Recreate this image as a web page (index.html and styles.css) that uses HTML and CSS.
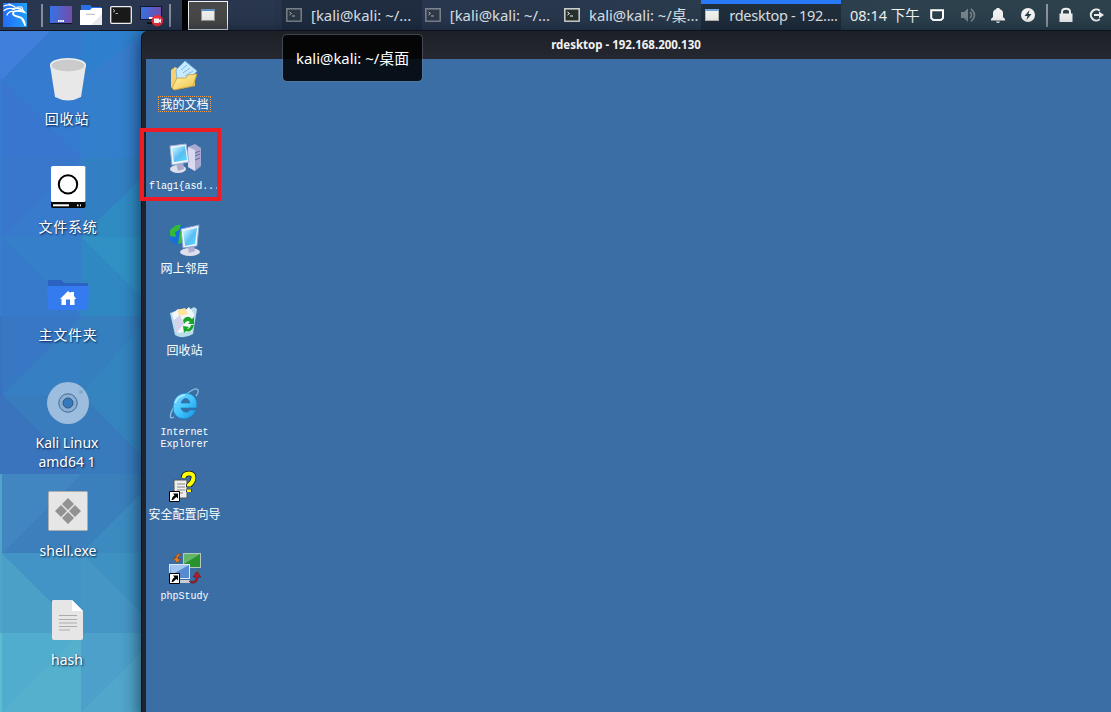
FILE: index.html
```html
<!DOCTYPE html>
<html lang="zh-CN">
<head>
<meta charset="utf-8">
<title>Kali desktop</title>
<link rel="stylesheet" href="styles.css">
</head>
<body>
<div class="screen">
<svg class="wallpaper" width="150" height="682" viewBox="0 30 150 682" shape-rendering="crispEdges">
  <rect y="30" width="150" height="682" fill="#377dcd"/>
  <path d="M0 30H51L3 79H0z" fill="#407fdc"/><path d="M51 30H81L3 79z" fill="#347bd0"/><path d="M81 30H150L81 79z" fill="#2e7fcd"/><path d="M51 30H81V79H3z" fill="#347bd0"/>
  <path d="M2 79H81V158z" fill="#357bd0"/><path d="M2 79V158H81z" fill="#3876d0"/><path d="M81 79H150V158H81z" fill="#347fcb"/>
  <path d="M2 158H81L2 237z" fill="#3877cc"/><path d="M81 158V237H2z" fill="#387bcc"/><path d="M81 158H150V170L81 237z" fill="#327fc3"/><path d="M150 170V237H81z" fill="#308bc3"/>
  <path d="M2 237H81V316z" fill="#347fc7"/><path d="M2 237V316H81z" fill="#377acb"/><path d="M81 237H150V306z" fill="#3191c4"/><path d="M81 237V316H150V306z" fill="#3088c2"/>
  <path d="M2 316H81L2 395z" fill="#3777c3"/><path d="M81 316V395H2z" fill="#377fc3"/><path d="M81 316H150L81 395z" fill="#357fbe"/><path d="M150 316V395H81z" fill="#3484c0"/>
  <path d="M2 395H81V474z" fill="#397cbd"/><path d="M2 395V474H81z" fill="#3a74bd"/><path d="M81 395H150V464z" fill="#3584bf"/><path d="M81 395V474H150V464z" fill="#387bbd"/>
  <path d="M2 474H81L2 553z" fill="#4186c1"/><path d="M81 474V553H2z" fill="#3c7fbc"/><path d="M81 474H150V485L81 553z" fill="#3980bc"/><path d="M150 485V553H81z" fill="#3b8bc1"/>
  <path d="M2 553H81V633z" fill="#4293c6"/><path d="M2 553V633H81z" fill="#4ba0c7"/><path d="M81 553H150V622z" fill="#3d92c3"/><path d="M81 553V633H150V622z" fill="#4696c5"/>
  <path d="M2 633H81L2 712z" fill="#50adcd"/><path d="M81 633V712H2z" fill="#55b0cd"/><path d="M81 633H150V644L81 712z" fill="#4ca0c9"/><path d="M150 644V712H81z" fill="#51a6cb"/>
  <path d="M0 316H2V474H0z" fill="#3973c0"/><path d="M0 474H2V633H0z" fill="#51a3c8"/><path d="M0 633H2V712H0z" fill="#5bbdd0"/>
</svg>

<header class="panel">
  <svg class="launchers" width="282" height="30" viewBox="0 0 282 30">
    <defs>
      <linearGradient id="kali" x2="1"><stop stop-color="#246cf5"/><stop offset="1" stop-color="#21a0f8"/></linearGradient>
      <linearGradient id="desk" x2="1"><stop stop-color="#3474e5"/><stop offset="1" stop-color="#764ba9"/></linearGradient>
    </defs>
    <rect x="3" y="3" width="24" height="24" fill="url(#kali)"/>
    <g fill="none" stroke="#fff" stroke-linecap="round">
      <path stroke-width="1.3" d="M4 6Q10 3.5 15 7M4 10.5Q9 7 14 9.5M7 15Q9 11 13 11.5M9 4L15 7"/>
      <path stroke-width="1.8" d="M13 9Q18 7 22 10L24 12L20 11Q13 10 13 14Q14 16 19 17Q24 18 25 25"/>
      <path stroke-width="1" d="M17 7L22 7L23 10M22 20L25 25"/>
    </g>
    <rect x="41" y="4" width="2" height="23" fill="#858d9b"/>
    <rect x="50" y="6" width="22" height="17" fill="url(#desk)"/><path d="M50 23.5H72" stroke="#11152a"/><path d="M58 21H64" stroke="#fff" stroke-width="2" stroke-dasharray="1.6 .6"/>
    <path d="M81 5H90L92 7H101V13H81z" fill="#2870e8"/><path d="M80 10H90L92 8H102V25H80z" fill="#fff"/><path d="M102 14V25H91z" fill="#e9e9e9"/><path d="M86 14.3H95" stroke="#bbb"/>
    <rect x="110.7" y="6.7" width="20.6" height="16.6" rx="1" fill="#191919" stroke="#eee" stroke-width="1.3"/><path d="M113 9L115 11L113 12M115.5 13.5H118" fill="none" stroke="#aaa"/>
    <rect x="140.5" y="6.5" width="21" height="13" fill="url(#desk)" stroke="#14172a"/><path d="M147 23H157" stroke="#111" stroke-width="2"/><path d="M149 18H153" stroke="#fff" stroke-width="2"/><circle cx="157.3" cy="20.7" r="5.8" fill="#f52d3d"/><path d="M154 18.5H159V20L161 18.7V23L159 21.7V23H154z" fill="#fff"/>
    <rect x="169" y="4" width="2" height="23" fill="#858d9b"/>
    <path d="M182 0H188V30H182z" fill="#000"/><rect x="188.5" y="1.5" width="39" height="28" fill="#484848" stroke="#f2f2f2"/>
    <rect x="201.5" y="9.5" width="13" height="11" fill="#eee" stroke="#969992"/><path d="M201 10H215" stroke="#628fc1" stroke-width="2"/>
    <path d="M275 0H282V30H275z" fill="#28344b"/>
  </svg>
  <nav class="tasks">
    <div class="task dark"><svg class="term dim" width="16" height="14"><rect x=".8" y=".8" width="14.4" height="12.4" fill="#343d47" stroke="#bdbfc0" stroke-width="1.4"/><path d="M3.5 4L5.5 5.5L3.5 7M6 8H9" fill="none" stroke="#fff"/></svg><span>[kali@kali: ~/...</span></div>
    <div class="task"><svg class="term dim" width="16" height="14"><rect x=".8" y=".8" width="14.4" height="12.4" fill="#343d47" stroke="#bdbfc0" stroke-width="1.4"/><path d="M3.5 4L5.5 5.5L3.5 7M6 8H9" fill="none" stroke="#fff"/></svg><span>[kali@kali: ~/...</span></div>
    <div class="task"><svg class="term" width="16" height="14"><rect x=".8" y=".8" width="14.4" height="12.4" fill="#28312e" stroke="#d5d6d1" stroke-width="1.5"/><path d="M3.5 4L5.5 5.5L3.5 7M6 8H9" fill="none" stroke="#fff"/></svg><span>kali@kali: ~/桌...</span></div>
    <div class="task active"><svg class="term" width="16" height="14"><rect x="1.5" y="1.5" width="13" height="11" fill="#f0f0ec" stroke="#b8bab4"/><path d="M1 2H15" stroke="#70a3da" stroke-width="2"/></svg><span>rdesktop - 192....</span></div>
  </nav>
  <time class="clock">08:14 下午</time>
  <svg class="tray" width="185" height="30" viewBox="926 0 185 30">
    <path d="M931.2 10.2H943V18L941 20H933.2L931.2 18z" fill="none" stroke="#fff" stroke-width="2"/>
    <g opacity=".35"><path d="M961 12H964L968 8.5V22L964 18H961z" fill="#fff"/><path d="M970 12Q973 15 970 18M971 8.8Q978 15 971 21.3" fill="none" stroke="#fff" stroke-width="1.6"/></g>
    <path d="M991 20.5V19L993 17V13Q993 10 996.5 9V8H999.5V9Q1003 10 1003 13V17L1005 19V20.5zM996 21.5H1000Q999.5 23 998 23T996 21.5" fill="#f2f2f2"/>
    <circle cx="1028" cy="15" r="7" fill="#f3f3f3"/><path d="M1029.5 10L1024.5 16H1027.5L1026.5 20L1031.5 14H1028.5z" fill="#293b49"/>
    <rect x="1046" y="4" width="2" height="23" fill="#89949e"/>
    <path d="M1059.5 13.5H1072.5V22H1059.5z" fill="#eee"/><path d="M1062 14V12Q1062 8.8 1066 8.8T1070 12V14" fill="none" stroke="#eee" stroke-width="2"/>
    <path d="M1099.8 10.7A5.5 5.5 0 1 0 1099.8 19.3M1094 15H1100" fill="none" stroke="#eee" stroke-width="2.1"/><path d="M1099 11.5L1104 15L1099 18.5z" fill="#eee"/>
  </svg>
</header>

<main class="desktop">
  <div class="item"><svg width="48" height="48"><path d="M6 10L11 42Q24 49 37 42L42 10z" fill="#e8e8e8"/><ellipse cx="24" cy="10" rx="18" ry="7" fill="#efefef"/><ellipse cx="24" cy="10.5" rx="16.5" ry="6" fill="#cbcbcb"/></svg><span class="shift cjk">回收站</span></div>
  <div class="item"><svg width="48" height="48"><rect x="7" y="3" width="34.5" height="42" rx="2" fill="#080808"/><rect x="7" y="3" width="34.5" height="36" rx="1.5" fill="#fff"/><circle cx="24" cy="21.4" r="9.2" fill="none" stroke="#000" stroke-width="2"/><path d="M9 42.3H25" stroke="#fff" stroke-width="2"/><path d="M33 42.3H37" stroke="#fff" stroke-width="1.7" stroke-dasharray="1.5"/></svg><span class="cjk">文件系统</span></div>
  <div class="item"><svg width="48" height="48"><path d="M4 9H17L20 12H44V20H4z" fill="#2c62bf"/><path d="M3 15H45L44 37Q44 39 42 39H6Q4 39 4 37z" fill="#347bef"/><path d="M16 28L24 20L26.5 22V21H30V25L32.3 28H30.5V34H26V28.5H22V34H17.5V28z" fill="#fff"/></svg><span class="cjk">主文件夹</span></div>
  <div class="item"><svg width="48" height="48"><circle cx="24" cy="24" r="21" fill="#9cbddd"/><circle cx="37" cy="13" r="2" fill="#81a9cf"/><circle cx="24" cy="24" r="9.2" fill="#8bafd5" stroke="#426993"/><circle cx="24" cy="24" r="5" fill="#347abd" stroke="#315779"/></svg><span class="shift">Kali Linux<br>amd64 1</span></div>
  <div class="item"><svg width="48" height="48"><rect x="4.5" y="4.5" width="39" height="39" rx="1" fill="#e6e6e6" stroke="#adadad"/><path d="M24 11L30 17L24 23L18 17zM24 25L30 31L24 37L18 31zM17 18L23 24L17 30L11 24zM31 18L37 24L31 30L25 24z" fill="#929292"/></svg><span>shell.exe</span></div>
  <div class="item last"><svg width="48" height="48"><path d="M9 4H28L39 15V42Q39 44 37 44H10Q8 44 8 42V5z" fill="#e6e6e6"/><path d="M28 4L39 15H28z" fill="#fff"/><path d="M15 19.5H33M15 23.5H33M15 27H33M15 30.5H33M15 34H26" stroke="#ababab"/></svg><span class="shift">hash</span></div>
</main>

<section class="window">
  <h1 class="title">rdesktop - 192.168.200.130</h1>
  <div class="client">
    <svg width="0" height="0" class="defs"><defs>
      <linearGradient id="lcd" x2="1" y2="1"><stop stop-color="#d6ffff"/><stop offset=".55" stop-color="#58bdf4"/><stop offset="1" stop-color="#58dfff"/></linearGradient>
      <linearGradient id="gold" x2="1" y2="1"><stop stop-color="#fff9b0"/><stop offset="1" stop-color="#eebf45"/></linearGradient>
      <linearGradient id="ie" x2="1" y2="1"><stop stop-color="#7ed8ff"/><stop offset=".5" stop-color="#43c7ff"/><stop offset="1" stop-color="#168bdc"/></linearGradient>
      <g id="shortcut"><path d="M.5 21.5H10.5V31.5H.5z" fill="#fff" stroke="#000"/><path d="M4 23.5H9V28.5L7.3 27L4 30H2.5Q2.5 27 5.5 25.2z" fill="#000"/></g>
    </defs></svg>
    <div class="xp"><svg width="32" height="32"><path d="M2 10L6 7L10 9V14L26 12V26L5 30L2 27z" fill="#f5d070"/><path d="M7 10L16 1L28 11L18 23L8 19z" fill="#c9eaff" stroke="#72b5e8"/><path d="M12 10L18 5M14 13L21 8M16 16L24 11" stroke="#78bced"/><path d="M3 28L8 18L17 18L19 15L28 14L24 26L5 30z" fill="url(#gold)" stroke="#c89c38" stroke-width=".8"/></svg><span class="selected">我的文档</span></div>
    <div class="xp"><svg width="32" height="32"><path d="M19 5L26 2L32 6V24L26 29L19 25z" fill="#aaa9d2"/><path d="M19 5L26 8V29L19 25z" fill="#d9daef"/><path d="M26 11L31 9M26 14L31 12M26 18L31 16" stroke="#66699f"/><ellipse cx="9" cy="27" rx="8" ry="4" fill="#dfdfeb"/><path d="M7 21L14 20L15 27L9 29z" fill="#aaa9cc"/><path d="M1 4L17 2L20 20L3 23z" fill="#eef3fb" stroke="#9db3d7"/><path d="M3 6L16 4L18 18L5 20z" fill="url(#lcd)"/></svg><span class="latin tight">flag1{asd...</span></div>
    <div class="xp"><svg width="32" height="32"><circle cx="10" cy="11" r="10" fill="#176eda"/><path d="M1 6Q7 0 12 1L10 6L6 8L7 13L1 12zM11 7L15 8L13 19L9 20L10 14z" fill="#35ba37"/><ellipse cx="21" cy="28" rx="10" ry="4" fill="#dedeed"/><path d="M18 20H25L26 27L20 29z" fill="#b1aed1"/><path d="M12 5L30 1L28 22L14 24z" fill="#eef4ff" stroke="#87a4d0"/><path d="M14 7L28 4L26 20L16 22z" fill="url(#lcd)"/></svg><span>网上邻居</span></div>
    <div class="xp"><svg width="32" height="32"><path d="M1 7L6 29Q14 34 24 28L28 3L25 1L18 5L12 3z" fill="#b9ddeb"/><path d="M3 8L9 3L14 6L20 1L25 8L23 25L9 27z" fill="#f3f7fa"/><path d="M8 4L16 2L19 8L10 10z" fill="#ffe4a0"/><path d="M5 14L11 9L15 18L7 27z" fill="#d4d4ec"/><path d="M14 14Q18 8 23 13L25 11L25 18H19L21 16Q18 13 15 18zM25 19Q23 27 17 25L15 27L14 20L20 21L18 23Q21 23 22 19z" fill="#17a526"/></svg><span>回收站</span></div>
    <div class="xp"><svg width="32" height="32"><path d="M5 29Q0 32 2 25Q5 16 15 8Q27-2 29 2Q30 4 27 8" fill="none" stroke="#83c3e4" stroke-width="1.3"/><path d="M28 20H12Q13 25 19 24L21 22H27Q24 30 15 31Q4 30 4 19Q5 5 18 5Q29 7 28 20zM12 15H21Q20 10 16 10.5Q13 11 12 15z" fill="url(#ie)" fill-rule="evenodd" stroke="#187cba" stroke-width=".7"/><path d="M6 15Q8 8 16 7" fill="none" stroke="#a8e5ff" stroke-width="2"/></svg><span class="latin">Internet<br>Explorer</span></div>
    <div class="xp"><svg width="32" height="32"><path d="M5 10H18V28H5z" fill="#eee" stroke="#555"/><path d="M8 14H16M8 17H16M8 20H16M8 23H14" stroke="#888"/><g fill="none" stroke-linejoin="round" transform="translate(0 2)"><path d="M14.5 6Q15 1.5 20 1.5T24.5 6T20 13V15M20 17.5V20" stroke="#111" stroke-width="5.5"/><path d="M14.5 6Q15 1.5 20 1.5T24.5 6T20 13V14.5M20 17.5V20" stroke="#ff0" stroke-width="4"/></g><use href="#shortcut"/></svg><span>安全配置向导</span></div>
    <div class="xp"><svg width="32" height="32"><rect x="14.5" y="1.5" width="17" height="14" fill="#28932e" stroke="#b6c8be"/><path d="M15 2H31L15 12z" fill="#64b769"/><path d="M31 16L24 21L31 24z" fill="#536474"/><rect x=".5" y="12.5" width="20" height="14" fill="#5689cd" stroke="#d7e7f6"/><path d="M1 13H20L2 23z" fill="#a3c6f1"/><path d="M10 28H21V31H8z" fill="#c7ccd0"/><path d="M11 2Q7 1 7 6H4L8 11L12 7H9Q8 4 12 3z" fill="#e77a1d" stroke="#743a1a" stroke-width=".6"/><path d="M20 29Q27 31 27 25H24L28 20L32 25H29Q29 32 22 31z" fill="#bd1b24" stroke="#531825" stroke-width=".6"/><use href="#shortcut"/></svg><span class="latin">phpStudy</span></div>
  </div>
</section>
<div class="highlight"></div>
<div class="tooltip">kali@kali: ~/桌面</div>
</div>
</body>
</html>
```
FILE: styles.css
```css
* { box-sizing: border-box; }
body { margin: 0; }
.screen { position: relative; width: 1111px; height: 712px; overflow: hidden; background: #377dcd; font: 14px/19px "Noto Sans", "Noto Sans CJK SC", sans-serif; }
.wallpaper { position: absolute; left: 0; top: 30px; }
.panel { position: relative; display: flex; align-items: center; height: 31px; border-bottom: 1px solid #10141c; background: linear-gradient(90deg, #29364f 0, #29374d 50%, #2c404d 80%, #2c414c); color: #f2f2f2; }
.launchers, .tray { flex: none; }
.tasks { display: flex; width: 559px; height: 30px; }
.task { display: flex; align-items: center; width: 139.75px; padding-left: 4px; gap: 9px; white-space: nowrap; font-size: 14.9px; color: #dce0e4; }
.task span { flex: none; }
.task:nth-child(2) { padding-left: 3px; }
.task:nth-child(3) { padding-left: 2.5px; font-size: 14.8px; }
.dark { background: #202d41; }
.active { border-top: 4px solid #2878f8; padding: 0 0 4px 3px; background: #202d3b; font-size: 14.5px; letter-spacing: -.26px; }
.term { flex: none; }
.dim { opacity: .62; }
.clock { width: 85px; padding-left: 9px; font-size: 14.5px; white-space: nowrap; }
.desktop { position: relative; width: 136px; padding-top: 24px; }
.item { display: flex; flex-direction: column; align-items: center; height: 108.1px; gap: 6px; text-align: center; color: #fff; text-shadow: 1px 1px 2px #001b42; }
.item svg, .item span { flex: none; }
.cjk { letter-spacing: .8px; }
.last { padding-top: 1px; }
.shift { margin-right: 2px; }
.window { position: absolute; left: 141px; top: 31px; width: 980px; height: 691px; padding-left: 5px; border-radius: 7px 0 0; background: linear-gradient(#1d2027, #252830 28px, #20232b 29px); box-shadow: inset 1px 0 #10131b, -1px 1px 18px rgba(0, 17, 34, .65); }
.title { height: 28px; margin: 0; padding-right: 15px; text-align: center; font: bold 11.5px/27px "Noto Sans", sans-serif; color: #f2f2f2; }
.client { height: 663px; padding-top: 1px; background: #3a6ea5; }
.defs { display: block; }
.xp { display: flex; flex-direction: column; align-items: center; width: 77px; height: 82px; gap: 6px; font: 12px/12px "Noto Sans CJK SC", sans-serif; color: #fff; text-align: center; white-space: nowrap; }
.xp svg, .xp span { flex: none; }
.xp .latin { padding-top: 1px; font-family: "Liberation Mono", monospace; font-size: 10px; }
.xp .tight { letter-spacing: -.1px; }
.xp .selected { outline: 1px dotted #ed9e4b; outline-offset: 1px; }
.highlight { position: absolute; left: 140px; top: 128px; width: 81px; height: 73px; border: 4px solid #ee1c25; }
.tooltip { position: absolute; left: 282px; top: 34px; width: 141px; height: 48px; border: 1px solid rgba(130, 140, 155, .35); border-radius: 5px; padding: 14px 13px; background: rgba(0, 0, 0, .85); background-clip: padding-box; color: #fff; font-size: 14.9px; white-space: nowrap; }
```
